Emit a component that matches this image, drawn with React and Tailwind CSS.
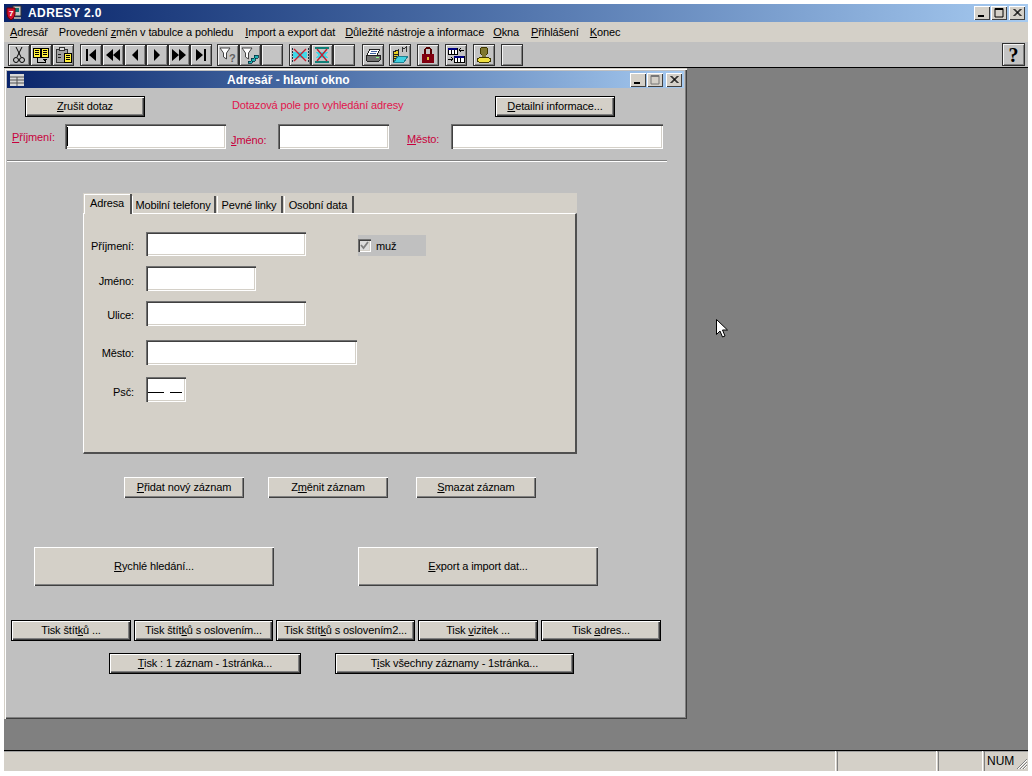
const raised = "shadow-[inset_1px_1px_0_#ffffff,inset_-1px_-1px_0_#404040,inset_-2px_-2px_0_#808080]";
const sunken = "shadow-[inset_1px_1px_0_#707070,inset_2px_2px_0_#404040,inset_-1px_-1px_0_#ffffff,inset_-2px_-2px_0_#d4d0c8]";

function Btn({ className = "", children, strong }) {
  return (
    <div className={`absolute flex items-center justify-center whitespace-nowrap bg-[#d4d0c8] text-black ${strong ? "border border-black" : ""} ${raised} ${className}`}>
      <span className="pb-px">{children}</span>
    </div>
  );
}
function Field({ className = "", children }) {
  return <div className={`absolute bg-white ${sunken} ${className}`}>{children}</div>;
}
function Label({ className = "", children }) {
  return <div className={`absolute whitespace-nowrap ${className}`}>{children}</div>;
}
function ToolBtn({ children, className = "" }) {
  return (
    <div className={`flex h-[22px] w-[22px] items-center justify-center border border-[#303030] bg-[#c4c4c4] shadow-[inset_1px_1px_0_#f4f4f4,inset_-1px_-1px_0_#808080] ${className}`}>
      {children}
    </div>
  );
}
function WinBtn({ type, className = "" }) {
  return (
    <div className={`flex h-[14px] w-[16px] items-center justify-center bg-[#d4d0c8] shadow-[inset_1px_1px_0_#ffffff,inset_-1px_-1px_0_#404040] ${className}`}>
      <svg width="12" height="10" viewBox="0 0 12 10">
        {type === "min" && <rect x="2" y="7" width="6" height="2" fill="#000" />}
        {type === "max" && <path d="M2 .5h8v8.5h-8z M2 1.5h8" fill="none" stroke={className.includes("dim") ? "#777" : "#000"} strokeWidth="1" />}
        {type === "close" && <path d="M2.5 1l7 7M3.5 1l7 7M9.5 1l-7 7M10.5 1l-7 7" stroke="#000" strokeWidth="1" />}
      </svg>
    </div>
  );
}
const Ico = ({ children }) => <svg width="18" height="18" viewBox="0 0 18 18" shapeRendering="crispEdges">{children}</svg>;
const Nav = ({ d }) => <svg width="16" height="14" viewBox="0 0 16 14"><path d={d} fill="#000" /></svg>;
const Doc = ({ x, y }) => (
  <g>
    <rect x={x} y={y} width="7" height="9" fill="#ffef3a" stroke="#000" />
    <path d={`M${x + 1.5} ${y + 2.5}h4M${x + 1.5} ${y + 4.5}h4M${x + 1.5} ${y + 6.5}h4`} stroke="#000" />
  </g>
);
const XTable = ({ hour }) => (
  <Ico>
    {hour ? (
      <>
        <path d="M3 6h12l-2 3 2 3H3l2-3z" fill="#40d8e8" />
        <path d="M2 2h14M2 16h14" stroke="#108078" strokeWidth="2" />
        <path d="M4 3l10 12M14 3L4 15" stroke="#c02030" strokeWidth="1.4" shapeRendering="auto" />
      </>
    ) : (
      <>
        <rect x="2" y="6" width="14" height="6" fill="#40d8e8" />
        <path d="M1 2v14M17 2v14" stroke="#203040" strokeDasharray="2 1" />
        <path d="M3 3l12 12M15 3L3 15" stroke="#c02030" strokeWidth="1.4" shapeRendering="auto" />
      </>
    )}
  </Ico>
);
const Funnel = () => <path d="M1 2h10L7.5 7v6l-3-2V7z" fill="#fff" stroke="#444" strokeWidth="1" shapeRendering="auto" />;

export default function App() {
  return (
    <div className="relative h-[776px] w-[1032px] overflow-hidden bg-white text-[11px] leading-[14px] tracking-[-0.12px] text-black [font-family:Liberation_Sans,Arial,sans-serif]">
      <div className="absolute left-[4px] top-[4px] h-[767px] w-[1024px] bg-[#d4d0c8]">
        {/* main title bar */}
        <div className="flex h-[18px] w-full items-center bg-gradient-to-r from-[#0a246a] to-[#a6caf0] pl-[2px]">
          <svg width="16" height="16" viewBox="0 0 16 16" className="shrink-0">
            <rect x="7" y="1" width="8" height="10" fill="#c8c8c8" stroke="#303030" />
            <rect x="9" y="3" width="4" height="4" fill="#107070" />
            <path d="M1 3h8v6q0 4-4 6-4-2-4-6z" fill="#d01030" stroke="#600" />
            <text x="3" y="11" fontSize="8" fontWeight="700" fill="#fff" fontFamily="Liberation Sans">7</text>
            <rect x="8" y="12" width="7" height="2" fill="#a0a0a0" />
          </svg>
          <span className="ml-[6px] text-[12px] font-bold tracking-[0.4px] text-white">ADRESY 2.0</span>
          <div className="ml-auto mr-[3px] flex">
            <WinBtn type="min" />
            <WinBtn type="max" className="ml-px" />
            <WinBtn type="close" className="ml-[2px]" />
          </div>
        </div>
        {/* menu */}
        <div className="flex h-[20px] w-full items-center bg-[#d4d0c8] pl-[6px]">
          <span className="mr-[11px] whitespace-nowrap"><u>A</u>dresář</span>
          <span className="mr-[12px] whitespace-nowrap">Provedení <u>z</u>měn v tabulce a pohledu</span>
          <span className="mr-[10px] whitespace-nowrap"><u>I</u>mport a export dat</span>
          <span className="mr-[9px] whitespace-nowrap"><u>D</u>ůležité nástroje a informace</span>
          <span className="mr-[12px] whitespace-nowrap"><u>O</u>kna</span>
          <span className="mr-[11px] whitespace-nowrap"><u>P</u>řihlášení</span>
          <span className="whitespace-nowrap"><u>K</u>onec</span>
        </div>
        {/* toolbar */}
        <div className="relative flex h-[25px] w-full items-start bg-[#c0c0c0] pl-[4px] pt-[2px]">
          <ToolBtn>
            <svg width="14" height="18" viewBox="0 0 14 18"><path d="M4 1l5 10M10 1L5 11" stroke="#000" fill="none" /><circle cx="4" cy="14" r="2.5" fill="none" stroke="#000" /><circle cx="10" cy="14" r="2.5" fill="none" stroke="#000" /></svg>
          </ToolBtn>
          <ToolBtn><Ico><Doc x={1} y={2} /><Doc x={9} y={2} /><path d="M5 12v4h8v-2M11 13l2 1.5 2-1.5" fill="none" stroke="#000" /></Ico></ToolBtn>
          <ToolBtn><Ico><rect x="2" y="3" width="11" height="13" fill="#a0a0a0" stroke="#333" /><rect x="5" y="1" width="5" height="3" fill="#ddd" stroke="#333" /><Doc x={10} y={7} /><path d="M4 8h3M4 11h3" stroke="#222" /></Ico></ToolBtn>

          <div className="ml-[6px] flex">
            <ToolBtn><Nav d="M3 1h2v12H3zM13 1v12L6 7z" /></ToolBtn>
            <ToolBtn><Nav d="M8 1v12L1 7zM15 1v12L8 7z" /></ToolBtn>
            <ToolBtn><Nav d="M11 1v12L5 7z" /></ToolBtn>
            <ToolBtn><Nav d="M5 1v12l6-6z" /></ToolBtn>
            <ToolBtn><Nav d="M1 1v12l7-6zM8 1v12l7-6z" /></ToolBtn>
            <ToolBtn><Nav d="M3 1v12l7-6zM11 1h2v12h-2z" /></ToolBtn>
          </div>
          <div className="ml-[5px] flex">
            <ToolBtn><Ico><Funnel /><text x="10" y="16" fontSize="11" fontWeight="700" fill="#606060" fontFamily="Liberation Sans">?</text></Ico></ToolBtn>
            <ToolBtn><Ico><Funnel /><path d="M7 15h3v-3h3V9h4v3h-3v3h-3v2H7z" fill="#20b0b0" stroke="#003040" strokeWidth="0.8" /></Ico></ToolBtn>
            <ToolBtn />
          </div>
          <div className="ml-[6px] flex">
            <ToolBtn><XTable /></ToolBtn>
            <ToolBtn><XTable hour /></ToolBtn>
            <ToolBtn />
          </div>
          <div className="ml-[7px] flex">
            <ToolBtn><Ico><path d="M6 3h10l-3 6H3z" fill="#fff" stroke="#222" /><path d="M2 9h14v5q0 1-1 1H3q-1 0-1-1z" fill="#707070" stroke="#222" /><path d="M7 5h6M6 7h6" stroke="#4060a0" /><rect x="12" y="11" width="3" height="1" fill="#8f8" /></Ico></ToolBtn>
            <div className="w-[5px]" />
            <ToolBtn><Ico><path d="M2 6l5-2v11H2z" fill="#e8d020" stroke="#222" /><path d="M2 8h5M2 10h5M2 12h5" stroke="#222" /><path d="M3 16l4-6h10l-4 6z" fill="#40d0e0" stroke="#208090" /><path d="M11 6V1l2 2 2-2v5" fill="none" stroke="#333" /></Ico></ToolBtn>
            <div className="w-[6px]" />
            <ToolBtn><Ico><path d="M6 8V5q0-3 3-3t3 3v3" fill="none" stroke="#500" strokeWidth="1.6" /><rect x="3" y="8" width="12" height="9" fill="#800010" /><rect x="8" y="11" width="2" height="3" fill="#e0c040" /></Ico></ToolBtn>
            <div className="w-[6px]" />
            <ToolBtn><Ico><rect x="1" y="2" width="9" height="6" fill="#fff" stroke="#000" /><rect x="1" y="2" width="9" height="2" fill="#000080" /><path d="M4 4v4M7 4v4" stroke="#000" /><rect x="7" y="10" width="10" height="6" fill="#fff" stroke="#000" /><rect x="7" y="10" width="10" height="2" fill="#000080" /><path d="M10 12v4M13 12v4" stroke="#000" /><path d="M12 4h5M12 4l2-2M12 4l2 2M1 13h5M6 13l-2-2M6 13l-2 2" stroke="#000" fill="none" /></Ico></ToolBtn>
            <div className="w-[6px]" />
            <ToolBtn><Ico><circle cx="9" cy="5" r="4" fill="#807830" stroke="#403800" /><rect x="7" y="8" width="4" height="5" fill="#807830" /><ellipse cx="9" cy="14" rx="7" ry="2.5" fill="#f0e040" stroke="#403800" /></Ico></ToolBtn>
            <div className="w-[6px]" />
            <ToolBtn />
          </div>
          <ToolBtn className="absolute left-[998px] top-[1px] !h-[23px] !w-[23px]">
            <span className="[font-family:Liberation_Serif,serif] text-[20px] font-bold leading-none">?</span>
          </ToolBtn>
        </div>
        <div className="h-px w-full bg-black" />
        {/* MDI area */}
        <div className="relative h-[683px] w-full bg-[#808080]">
          <div className="absolute bottom-0 left-0 h-px w-full bg-black" />
        </div>
        {/* status */}
        <div className="absolute bottom-0 left-0 flex h-[20px] w-full bg-[#d4d0c8] shadow-[inset_0_1px_0_#a0a0a0]">
          <div className="h-full w-[832px] border-r border-white" />
          <div className="h-full w-[100px] border-r border-white border-l border-l-[#808080] ml-px" />
          <div className="h-full w-[45px] border-r border-white border-l border-l-[#808080] ml-px" />
          <div className="relative ml-px flex h-full flex-1 items-center border-l border-[#808080] pl-[2px] text-[12px] tracking-[0px]">
            NUM
            <svg width="12" height="12" viewBox="0 0 12 12" className="absolute bottom-[1px] right-0">
              <path d="M11 1L1 11M11 4L4 11M11 7L7 11" stroke="#808080" /><path d="M11 2L2 11M11 5L5 11M11 8L8 11" stroke="#fff" />
            </svg>
          </div>
        </div>
      </div>

      {/* child window */}
      <div className="absolute left-[4px] top-[68px] h-[651px] w-[683px] bg-[#c0c0c0] shadow-[inset_1px_1px_0_#d4d0c8,inset_2px_2px_0_#ffffff,inset_-1px_-1px_0_#404040,inset_-2px_-2px_0_#808080]" />
      <div className="absolute left-[7px] top-[71px] flex h-[17px] w-[677px] items-center bg-gradient-to-r from-[#0a246a] to-[#a6caf0]">
        <svg width="16" height="14" viewBox="0 0 16 14" className="ml-[2px]"><rect x="1" y="1" width="14" height="12" fill="#d8d8d8" /><path d="M1 4h14M1 7h14M1 10h14M8 4v9" stroke="#555" /></svg>
        <div className="absolute left-[220px] text-[12px] font-bold tracking-[0px] text-white">Adresář - hlavní okno</div>
        <div className="absolute right-[2px] top-[2px] flex">
          <WinBtn type="min" />
          <WinBtn type="max" className="dim ml-px" />
          <WinBtn type="close" className="ml-[3px]" />
        </div>
      </div>

      <Btn strong className="left-[25px] top-[96px] h-[21px] w-[120px]"><u>Z</u>rušit dotaz</Btn>
      <Label className="left-[232px] top-[98px] text-[#e0144c]">Dotazová pole pro vyhledání adresy</Label>
      <Btn strong className="left-[495px] top-[96px] h-[21px] w-[120px]"><u>D</u>etailní informace...</Btn>

      <Label className="left-[12px] top-[130px] text-[#c8003c]"><u>P</u>říjmení:</Label>
      <Field className="left-[65px] top-[124px] h-[25px] w-[161px]"><div className="ml-[2px] mt-[3px] h-[19px] w-px bg-black" /></Field>
      <Label className="left-[231px] top-[133px] text-[#c8003c]"><u>J</u>méno:</Label>
      <Field className="left-[278px] top-[124px] h-[25px] w-[111px]" />
      <Label className="left-[407px] top-[132px] text-[#c8003c]"><u>M</u>ěsto:</Label>
      <Field className="left-[451px] top-[124px] h-[25px] w-[212px]" />
      <div className="absolute left-[7px] top-[160px] h-px w-[660px] bg-[#808080]" />
      <div className="absolute left-[7px] top-[161px] h-px w-[660px] bg-white" />

      {/* tab control */}
      <div className="absolute left-[83px] top-[193px] h-[21px] w-[494px] bg-[#d4d0c8]" />
      <div className="absolute left-[83px] top-[213px] h-[241px] w-[494px] border-b-2 border-l border-r-2 border-t border-b-[#505050] border-l-white border-r-[#505050] border-t-white bg-[#d4d0c8]" />
      <div className="absolute left-[84px] top-[194px] flex h-[20px] w-[48px] items-center justify-center border-r-2 border-[#505050] bg-[#d4d0c8] shadow-[inset_1px_1px_0_#ffffff]">
        <span className="pb-[2px]">Adresa</span>
      </div>
      <div className="absolute left-[132px] top-[196px] flex h-[17px] w-[84px] items-center justify-center whitespace-nowrap border-r-2 border-[#505050] shadow-[inset_1px_0_0_#ffffff]">Mobilní telefony</div>
      <div className="absolute left-[217px] top-[196px] flex h-[17px] w-[66px] items-center justify-center whitespace-nowrap border-r-2 border-[#505050] shadow-[inset_1px_0_0_#ffffff]">Pevné linky</div>
      <div className="absolute left-[284px] top-[196px] flex h-[17px] w-[70px] items-center justify-center whitespace-nowrap border-r-2 border-[#505050] shadow-[inset_1px_0_0_#ffffff]">Osobní data</div>

      <Label className="right-[898px] top-[239px]">Příjmení:</Label>
      <Field className="left-[146px] top-[232px] h-[24px] w-[160px]" />
      <Label className="right-[898px] top-[274px]">Jméno:</Label>
      <Field className="left-[146px] top-[266px] h-[25px] w-[110px]" />
      <Label className="right-[898px] top-[308px]">Ulice:</Label>
      <Field className="left-[146px] top-[301px] h-[25px] w-[160px]" />
      <Label className="right-[898px] top-[346px]">Město:</Label>
      <Field className="left-[146px] top-[340px] h-[25px] w-[211px]" />
      <Label className="right-[898px] top-[385px]">Psč:</Label>
      <Field className="left-[146px] top-[377px] h-[25px] w-[40px]">
        <div className="absolute left-[2px] top-[15px] h-px w-[16px] bg-black" />
        <div className="absolute left-[24px] top-[15px] h-px w-[12px] bg-black" />
      </Field>
      <div className="absolute left-[358px] top-[235px] flex h-[21px] w-[68px] items-center bg-[#c0c0c0]">
        <div className={`flex h-[13px] w-[13px] items-center justify-center bg-[#dcdcdc] ${sunken}`}>
          <svg width="9" height="9" viewBox="0 0 9 9"><path d="M1 4l2.5 3L8 1" fill="none" stroke="#808080" strokeWidth="1.8" /></svg>
        </div>
        <span className="ml-[5px]">muž</span>
      </div>

      <Btn className="left-[124px] top-[477px] h-[21px] w-[120px]"><u>P</u>řidat nový záznam</Btn>
      <Btn className="left-[268px] top-[477px] h-[21px] w-[120px]">Z<u>m</u>ěnit záznam</Btn>
      <Btn className="left-[416px] top-[477px] h-[21px] w-[120px]"><u>S</u>mazat záznam</Btn>
      <Btn className="left-[34px] top-[547px] h-[39px] w-[240px]"><u>R</u>ychlé hledání...</Btn>
      <Btn className="left-[358px] top-[547px] h-[39px] w-[240px]"><u>E</u>xport a import dat...</Btn>

      <Btn strong className="left-[11px] top-[620px] h-[21px] w-[120px]">Tisk štít<u>k</u>ů ...</Btn>
      <Btn strong className="left-[134px] top-[620px] h-[21px] w-[139px]">Tisk štít<u>k</u>ů s oslovením...</Btn>
      <Btn strong className="left-[276px] top-[620px] h-[21px] w-[139px]">Tisk štít<u>k</u>ů s oslovením2...</Btn>
      <Btn strong className="left-[418px] top-[620px] h-[21px] w-[120px]">Tisk <u>v</u>izitek ...</Btn>
      <Btn strong className="left-[541px] top-[620px] h-[21px] w-[120px]">Tisk <u>a</u>dres...</Btn>
      <Btn strong className="left-[109px] top-[653px] h-[21px] w-[192px]"><u>T</u>isk : 1 záznam - 1stránka...</Btn>
      <Btn strong className="left-[335px] top-[653px] h-[21px] w-[239px]">T<u>i</u>sk všechny záznamy - 1stránka...</Btn>

      {/* mouse pointer */}
      <svg width="14" height="22" viewBox="0 0 14 22" className="absolute left-[716px] top-[319px]">
        <path d="M.5.5v15l3.5-3.5 2.5 6 2.5-1-2.5-6h5z" fill="#fff" stroke="#000" />
      </svg>
    </div>
  );
}
